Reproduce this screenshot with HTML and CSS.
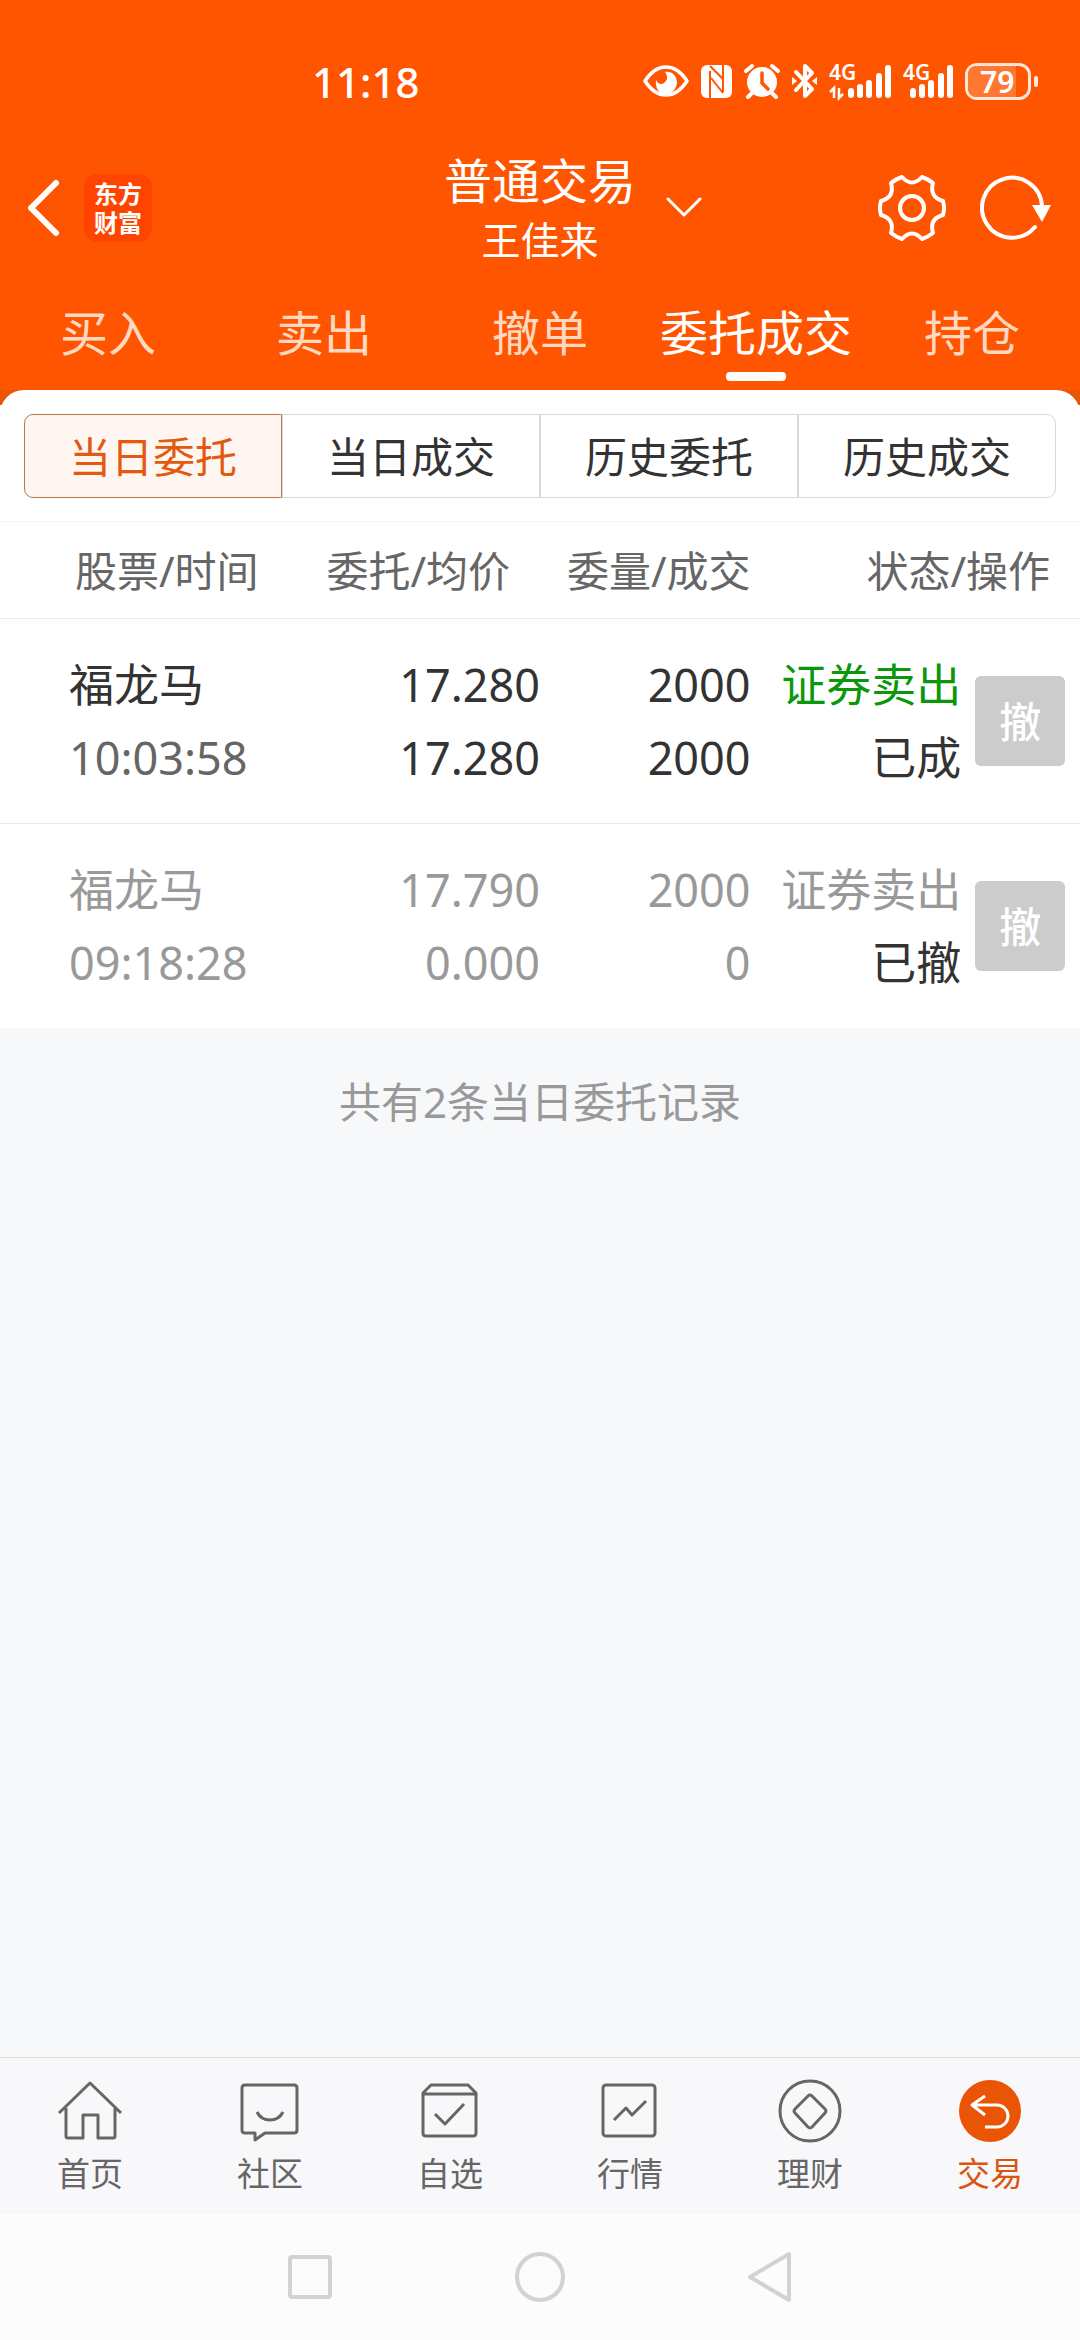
FILE: index.html
```html
<!DOCTYPE html>
<html lang="zh-CN">
<head>
  <meta charset="UTF-8" />
  <meta name="viewport" content="width=device-width, initial-scale=1.0"/>
  <title>普通交易 - 委托成交</title>
  <link rel="stylesheet" href="styles.css">
</head>
<body>
  <header class="header">
    <div class="status-bar">
      <span class="clock">11:18</span>
      <div class="status-icons">
        <svg width="46" height="36" viewBox="0 0 46 36">
          <path d="M2 18Q11 4 23 4T44 18Q35 32 23 32T2 18Z" fill="none" stroke="#fff" stroke-width="3.5" stroke-linejoin="round"/>
          <path d="M22 9C29 8 34 13 34 20C33 27 28 31 22 31C16 31 12 25 13 17C15 21 18 22 21 20C25 17 25 13 22 9Z" fill="#fff"/>
        </svg>
        <svg width="31" height="36" viewBox="0 0 31 36">
          <rect y="2" width="31" height="33" rx="6" fill="#fff"/>
          <path d="M9 35V8M22 2V29" stroke="#ff5500" stroke-width="2" fill="none"/>
          <path d="M9 3L22 16M10 15L22 30" stroke="#ff5500" stroke-width="2" fill="none"/>
        </svg>
        <svg width="36" height="36" viewBox="0 0 36 36">
          <circle cx="18" cy="19" r="15" fill="#fff"/>
          <path d="M2 8L8 3M34 8L28 3M4 34L9 29M32 34L27 29" stroke="#fff" stroke-width="4" stroke-linecap="round"/>
          <path d="M18 10V20L24 26" stroke="#ff5500" stroke-width="3.5" fill="none" stroke-linecap="round"/>
        </svg>
        <svg width="25" height="36" viewBox="0 0 25 36">
          <path d="M4 9L20 26L13 33V3L20 10L4 27" fill="none" stroke="#fff" stroke-width="4" stroke-linecap="round" stroke-linejoin="round"/>
          <path d="M0 14L5 18L0 22ZM25 14L20 18L25 22Z" fill="#fff"/>
        </svg>
        <svg class="signal" width="62" height="56" viewBox="0 -10 62 56">
          <text x="0" y="17">4G</text>
          <path d="M5 35V25L1 29M10 25V35L14 31" fill="none" stroke="#fff" stroke-width="2.5"/>
          <path d="M22 28V32M31 24V32M40 20V32M50 13V32M59 5V32" stroke="#fff" stroke-width="6" stroke-linecap="round"/>
        </svg>
        <svg class="signal" width="50" height="56" viewBox="0 -10 50 56">
          <text x="0" y="17">4G</text>
          <path d="M10 28V32M19 24V32M28 20V32M38 13V32M47 5V32" stroke="#fff" stroke-width="6" stroke-linecap="round"/>
        </svg>
        <div class="battery"><span class="battery-level">79</span></div>
      </div>
    </div>

    <div class="title-bar">
      <div class="title-left">
        <button type="button" class="icon-btn" aria-label="返回">
          <svg width="36" height="60" viewBox="0 0 36 60"><path d="M28 5L3 30L28 55" fill="none" stroke="#fff" stroke-width="6" stroke-linecap="round" stroke-linejoin="round"/></svg>
        </button>
        <a href="#" class="logo"><span>东方</span><span>财富</span></a>
      </div>
      <div class="title-center">
        <h1>普通交易</h1>
        <p>王佳来</p>
      </div>
      <div class="title-right">
        <button type="button" class="icon-btn" aria-label="切换账户">
          <svg width="36" height="22" viewBox="0 0 36 22"><path d="M2 2L18 18L34 2" fill="none" stroke="#fff" stroke-width="3" stroke-linecap="round" stroke-linejoin="round"/></svg>
        </button>
        <div class="title-actions">
          <button type="button" class="icon-btn" aria-label="设置">
            <svg width="68" height="68" viewBox="-34 -34 68 68">
              <g fill="none" stroke="#fff" stroke-width="4" stroke-linejoin="round">
                <path d="M-10 -31Q0 -20 10 -31Q16 -29 21 -25Q17 -11 31 -7Q33 0 31 7Q17 11 21 25Q16 29 10 31Q0 20 -10 31Q-16 29 -21 25Q-17 11 -31 7Q-33 0 -31 -7Q-17 -11 -21 -25Q-16 -29 -10 -31Z"/>
                <circle r="12"/>
              </g>
            </svg>
          </button>
          <button type="button" class="icon-btn" aria-label="刷新">
            <svg width="72" height="68" viewBox="0 0 72 68">
              <path d="M55 53A30 30 0 1 1 62 32" fill="none" stroke="#fff" stroke-width="4" stroke-linecap="round"/>
              <path d="M52 31H71L62 48Z" fill="#fff"/>
            </svg>
          </button>
        </div>
      </div>
    </div>

    <nav class="trade-tabs">
      <a href="#">买入</a>
      <a href="#">卖出</a>
      <a href="#">撤单</a>
      <a href="#" class="active">委托成交</a>
      <a href="#">持仓</a>
    </nav>
  </header>

  <main class="main">
    <section class="sheet">
      <div class="segment">
        <button type="button" class="active">当日委托</button>
        <button type="button">当日成交</button>
        <button type="button">历史委托</button>
        <button type="button">历史成交</button>
      </div>

      <table class="orders">
        <colgroup>
          <col class="w-name">
          <col class="w-price">
          <col class="w-amount">
          <col class="w-status">
          <col class="w-action">
        </colgroup>
        <thead>
          <tr>
            <th class="col-name">股票/时间</th>
            <th class="col-price">委托/均价</th>
            <th>委量/成交</th>
            <th class="col-status" colspan="2">状态/操作</th>
          </tr>
        </thead>
        <tbody>
          <tr>
            <td class="col-name">福龙马<br><span class="time">10:03:58</span></td>
            <td>17.280<br>17.280</td>
            <td>2000<br>2000</td>
            <td><span class="sell">证券卖出</span><br>已成</td>
            <td class="col-action"><button type="button" class="cancel-btn" disabled>撤</button></td>
          </tr>
          <tr class="cancelled">
            <td class="col-name">福龙马<br><span class="time">09:18:28</span></td>
            <td>17.790<br>0.000</td>
            <td>2000<br>0</td>
            <td><span class="sell">证券卖出</span><br><span class="state">已撤</span></td>
            <td class="col-action"><button type="button" class="cancel-btn" disabled>撤</button></td>
          </tr>
        </tbody>
      </table>
    </section>

    <p class="summary">共有2条当日委托记录</p>
  </main>

  <nav class="tab-bar">
    <a href="#">
      <svg viewBox="0 0 66 66"><path d="M2 35L33 5L64 35M9 30V58Q9 60 11 60H26V37H41V60H56Q58 60 58 58V30"/></svg>
      <span>首页</span>
    </a>
    <a href="#">
      <svg viewBox="0 0 66 66"><path d="M8 7H57Q60 7 60 10V52Q60 55 57 55H28L18 62V55H8Q5 55 5 52V10Q5 7 8 7Z"/><path d="M20 34Q24 42 33 42T46 34"/></svg>
      <span>社区</span>
    </a>
    <a href="#">
      <svg viewBox="0 0 66 66"><path d="M6 15L14 7H51L59 15V55Q59 58 56 58H9Q6 58 6 55ZM6 16H59M18 36L28 46L47 26"/></svg>
      <span>自选</span>
    </a>
    <a href="#">
      <svg viewBox="0 0 66 66"><rect x="6" y="7" width="52" height="51" rx="3"/><path d="M17 42L29 30L35 37L49 23"/></svg>
      <span>行情</span>
    </a>
    <a href="#">
      <svg viewBox="0 0 66 66"><circle cx="33" cy="33" r="30"/><path d="M31 18Q33 16 35 18L48 31Q50 33 48 35L35 49Q33 51 31 49L18 35Q16 33 18 31Z"/></svg>
      <span>理财</span>
    </a>
    <a href="#" class="active">
      <svg viewBox="0 0 66 66"><circle cx="33" cy="33" r="31"/><path d="M28 18L15 27L28 37M15 27H40A11 11 0 0 1 40 49H28"/></svg>
      <span>交易</span>
    </a>
  </nav>

  <div class="system-nav">
    <button type="button" class="icon-btn" aria-label="最近任务">
      <svg width="52" height="52" viewBox="0 0 52 52"><rect x="6" y="6" width="40" height="40" rx="2"/></svg>
    </button>
    <button type="button" class="icon-btn" aria-label="主屏幕">
      <svg width="52" height="52" viewBox="0 0 52 52"><circle cx="26" cy="26" r="23"/></svg>
    </button>
    <button type="button" class="icon-btn" aria-label="返回上一级">
      <svg width="52" height="52" viewBox="0 0 52 52"><path d="M6 26L45 3V49Z"/></svg>
    </button>
  </div>
</body>
</html>
```
FILE: styles.css
```css
body {
  margin: 0;
  min-height: 100vh;
  display: flex;
  flex-direction: column;
  background-color: #f7f8fa;
  color: #333;
  font-family: "Noto Sans", "Noto Sans CJK SC", sans-serif;
}

a {
  color: inherit;
  text-decoration: none;
}

button {
  font-family: inherit;
  box-sizing: border-box;
}

svg {
  display: block;
}

h1, p {
  margin: 0;
  font-weight: normal;
}

.icon-btn {
  padding: 0;
  border: none;
  background: none;
}

/* header */

.header {
  background-color: #ff5500;
  color: #fff;
}

.status-bar {
  display: flex;
  justify-content: space-between;
  align-items: center;
  box-sizing: border-box;
  height: 148px;
  padding: 14px 49px 0 312px;
}

.clock {
  font-size: 42px;
  font-weight: 500;
}

.status-icons {
  display: flex;
  align-items: center;
  gap: 12px;
}

.signal text {
  fill: #fff;
  font-size: 21px;
  font-weight: 600;
}

.battery {
  position: relative;
  box-sizing: border-box;
  width: 66px;
  height: 37px;
  padding-right: 12px;
  border: 3px solid #ffe6d6;
  border-radius: 12px;
}

.battery::after {
  content: "";
  position: absolute;
  right: -10px;
  top: 10px;
  width: 4px;
  height: 11px;
  border-radius: 2px;
  background-color: #ffe6d6;
}

.battery-level {
  display: block;
  padding-left: 12px;
  border-radius: 8px 0 0 8px;
  background-color: #ff7733;
  font-size: 30px;
  font-weight: 600;
  line-height: 31px;
}

.title-bar {
  display: grid;
  grid-template-columns: 1fr auto 1fr;
  align-items: center;
  height: 120px;
  padding: 0 28px;
}

.title-left {
  display: flex;
  align-items: center;
  gap: 20px;
}

.logo {
  display: flex;
  flex-direction: column;
  align-items: center;
  justify-content: center;
  width: 68px;
  height: 68px;
  border-radius: 14px;
  background-color: #ff4400;
  font-size: 24px;
  font-weight: 700;
  line-height: 29px;
}

.title-center {
  text-align: center;
}

.title-center h1 {
  font-size: 48px;
  line-height: 64px;
}

.title-center p {
  font-size: 39px;
  line-height: 54px;
}

.title-right {
  display: flex;
  justify-content: space-between;
  align-items: center;
  padding-left: 30px;
}

.title-actions {
  display: flex;
  gap: 34px;
}

.trade-tabs {
  display: grid;
  grid-template-columns: repeat(5, 1fr);
  height: 122px;
}

.trade-tabs a {
  display: flex;
  flex-direction: column;
  align-items: center;
  padding-top: 33px;
  color: #ffd8c2;
  font-size: 48px;
  line-height: 64px;
}

.trade-tabs .active {
  color: #fff;
}

.trade-tabs .active::after {
  content: "";
  width: 60px;
  height: 9px;
  margin-top: 7px;
  border-radius: 4px;
  background-color: #fff;
}

/* order list */

.main {
  flex: 1;
  background: linear-gradient(#ea5504 15px, #f7f8fa 15px);
}

.sheet {
  border-radius: 24px 24px 0 0;
  background-color: #fff;
}

.segment {
  display: grid;
  grid-template-columns: repeat(4, 1fr);
  padding: 24px 24px 23px;
}

.segment button {
  height: 84px;
  padding: 0 0 4px;
  border: 1px solid #d8d8d8;
  background-color: #fff;
  color: #333;
  font-size: 42px;
}

.segment button:first-child {
  border-radius: 9px 0 0 9px;
}

.segment button:last-child {
  border-radius: 0 9px 9px 0;
}

.segment .active {
  border-color: #c2744a;
  background-color: #fff6f2;
  color: #e2590f;
}

.orders {
  width: 100%;
  table-layout: fixed;
  border-spacing: 0;
  border-top: 1px solid #f5f5f5;
}

.w-name,
.w-price {
  width: 25%;
}

.w-amount,
.w-status {
  width: 19.5%;
}

.w-action {
  width: 11%;
}

.orders th,
.orders td {
  padding: 0;
  border-bottom: 1px solid #ebebeb;
  text-align: right;
  white-space: nowrap;
}

.orders th {
  height: 92px;
  padding-bottom: 4px;
  color: #666;
  font-size: 42px;
  font-weight: normal;
}

.orders td {
  height: 204px;
  font-size: 45px;
  line-height: 73px;
}

.orders tr:last-child td {
  border-bottom: none;
}

.orders .col-name {
  padding-left: 69px;
  text-align: left;
}

.orders th.col-name {
  padding-left: 75px;
}

.orders th.col-price,
.orders th.col-status {
  padding-right: 30px;
}

.orders .col-action {
  padding-left: 14px;
}

.time {
  color: #666;
}

.sell {
  color: #0a980a;
}

.cancelled,
.cancelled .time,
.cancelled .sell {
  color: #999;
}

.cancelled .state {
  color: #333;
}

.cancel-btn {
  display: block;
  width: 90px;
  height: 90px;
  padding: 0 0 4px;
  border: none;
  border-radius: 6px;
  background-color: #ccc;
  color: #fff;
  font-size: 42px;
  font-weight: 500;
}

.summary {
  padding: 46px 0;
  color: #999;
  font-size: 42px;
  line-height: 56px;
  text-align: center;
}

/* bottom bars */

.tab-bar {
  display: grid;
  grid-template-columns: repeat(6, 1fr);
  box-sizing: border-box;
  height: 157px;
  border-top: 1px solid #e0e0e0;
  background-color: #f8f8fb;
}

.tab-bar a {
  display: flex;
  flex-direction: column;
  align-items: center;
  gap: 8px;
  padding-top: 20px;
  color: #666;
  font-size: 33px;
  line-height: 44px;
}

.tab-bar svg {
  width: 66px;
  height: 66px;
  fill: none;
  stroke: #666;
  stroke-width: 3;
  stroke-linejoin: round;
}

.tab-bar .active {
  color: #d9560f;
}

.tab-bar .active svg {
  stroke: #fff;
}

.tab-bar .active circle {
  fill: #e95504;
  stroke: none;
}

.system-nav {
  display: flex;
  justify-content: center;
  align-items: center;
  gap: 178px;
  height: 126px;
  background-color: #fcfcfc;
}

.system-nav svg {
  fill: none;
  stroke: #d2d2d2;
  stroke-width: 4;
  stroke-linejoin: round;
}
```
